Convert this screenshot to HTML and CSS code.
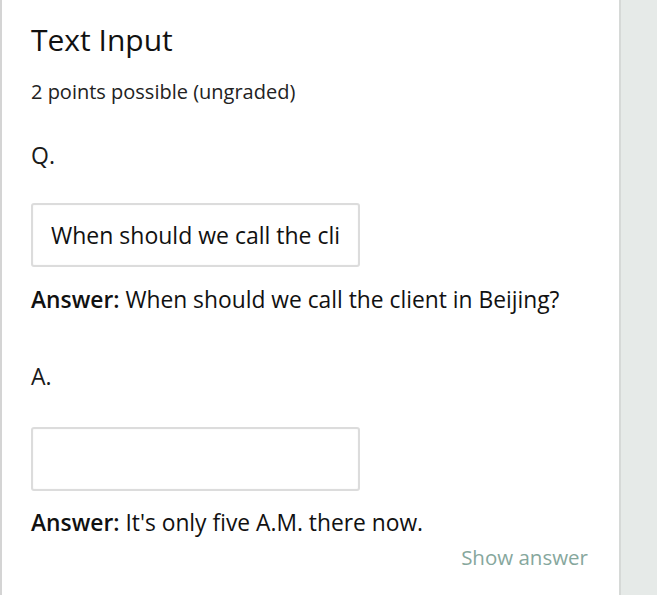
FILE: index.html
```html
<!DOCTYPE html>
<html>
<head>
<meta charset="utf-8">
<link rel="stylesheet" href="styles.css">
</head>
<body>
<div class="layout">
  <main class="problem">
    <h2 class="title">Text Input</h2>
    <div class="points">2 points possible (ungraded)</div>
    <p class="label">Q.</p>
    <div class="field"><input class="input" type="text" value="When should we call the client in Beijing?"></div>
    <p class="answer"><b>Answer:</b> When should we call the client in Beijing?</p>
    <p class="label label-a">A.</p>
    <div class="field field-a"><input class="input" type="text" value=""></div>
    <p class="answer answer-a"><b>Answer:</b> It's only five A.M. there now.</p>
    <div class="actions"><button class="show">Show answer</button></div>
  </main>
  <aside class="side"></aside>
</div>
</body>
</html>
```
FILE: styles.css
```css
html, body { margin: 0; padding: 0; height: 100%; background: #fff; }
body { font-family: "Open Sans", "Liberation Sans", sans-serif; color: #1a1a1a; overflow: hidden; }
.layout { display: flex; height: 595px; }
.problem { box-sizing: border-box; width: 619px; flex: none; border-left: 2px solid #d4d4d4; padding: 0 31px 0 29px; }
.side { flex: 1; background: #e6eae8; border-left: 2px solid #d6d9d7; }
.title { font-weight: 400; font-size: 30px; margin: 20px 0 0; line-height: 40px; color: #111; }
.points { font-size: 20px; margin-top: 19px; line-height: 26px; color: #222; }
.label { font-size: 23px; margin: 35px 0 0; line-height: 30px; color: #1a1a1a; }
.label-a { margin-top: 46px; }
.field { margin-top: 33px; }
.field-a { margin-top: 36px; }
.input { box-sizing: border-box; display: block; width: 329px; height: 64px; border: 2px solid #dcdcdc; border-radius: 3px; padding: 0 18px; font-family: inherit; font-size: 23px; color: #111; background: #fff; outline: none; box-shadow: inset 0 0 2px rgba(0,0,0,0.06); }
.answer { font-size: 22.8px; margin: 18px 0 0; line-height: 30px; color: #111; }
.answer-a { margin-top: 17px; }
.answer b { font-weight: 600; }
.actions { display: flex; justify-content: flex-end; margin-top: 5px; }
.show { background: none; border: none; padding: 0; font-family: inherit; font-size: 20.5px; color: #86a79d; line-height: 28px; cursor: pointer; }
```
